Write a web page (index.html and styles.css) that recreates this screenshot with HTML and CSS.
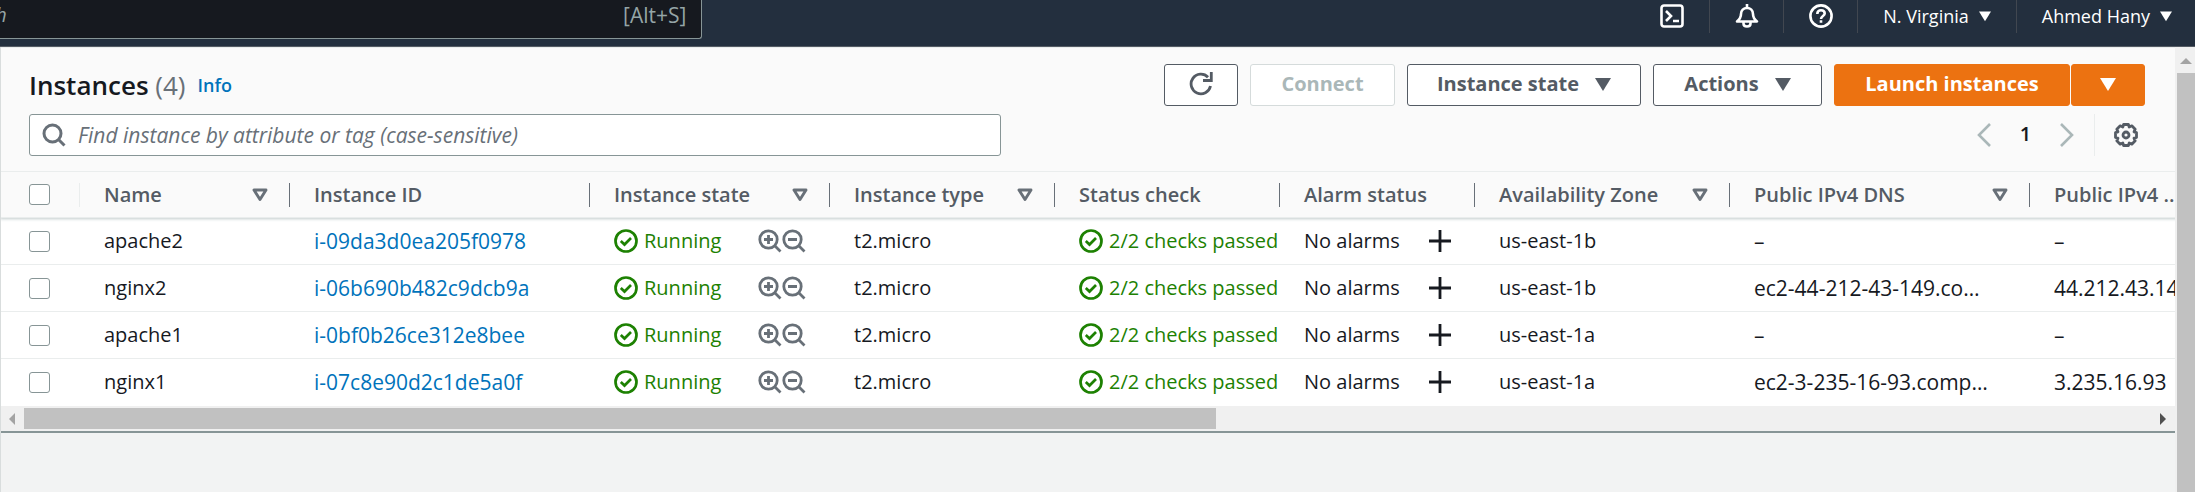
FILE: index.html
```html
<!DOCTYPE html>
<html lang="en">
<head>
<meta charset="utf-8">
<title>Instances | EC2 Management Console</title>
<link rel="stylesheet" href="styles.css">
</head>
<body>
<svg class="sprite" aria-hidden="true">
  <symbol id="caret" viewBox="0 0 16 16"><path d="M0 2h16L8 15z" fill="currentColor"/></symbol>
  <symbol id="sort" viewBox="0 0 16 14"><path d="M2 2h12L8 11.500z" fill="none" stroke="currentColor" stroke-width="2.900" stroke-linejoin="round"/></symbol>
  <symbol id="ok" viewBox="0 0 24 24"><g fill="none" stroke="currentColor" stroke-width="2.700"><circle cx="12" cy="12" r="10.500"/><path d="M6.800 12l3.700 3.500 6.500-6.500"/></g></symbol>
  <symbol id="zoom-in" viewBox="0 0 24 24"><g fill="none" stroke="currentColor" stroke-width="2.800"><circle cx="10.500" cy="10.500" r="8.700"/><path d="M16.500 16.500l6 6M6 10.500h9M10.500 6v9"/></g></symbol>
  <symbol id="zoom-out" viewBox="0 0 24 24"><g fill="none" stroke="currentColor" stroke-width="2.800"><circle cx="10.500" cy="10.500" r="8.700"/><path d="M16.500 16.500l6 6M6 10.500h9"/></g></symbol>
  <symbol id="plus" viewBox="0 0 22 22"><path d="M11 0v22M0 11h22" fill="none" stroke="currentColor" stroke-width="2.800"/></symbol>
</svg>

<header class="topbar">
  <div class="topsearch">
    <input class="topsearch-input" type="search" aria-label="Search services" placeholder="Search">
    <kbd class="shortcut">[Alt+S]</kbd>
  </div>
  <nav class="topnav" aria-label="Account">
    <button class="nav-icon" aria-label="CloudShell"><svg class="ico24" viewBox="0 0 24 24"><g fill="none" stroke="currentColor" stroke-width="2.600"><rect x="1.500" y="1.500" width="21" height="21" rx="2.500"/><path d="M6 7l5 5-5 5M13 17h6"/></g></svg></button>
    <button class="nav-icon" aria-label="Notifications"><svg class="ico24" viewBox="0 0 24 24"><g fill="none" stroke="currentColor" stroke-width="2.600" stroke-linejoin="round"><path d="M12 0v4M2 17.500c3-2.500 4-4.500 4-7.500 0-3.700 2.500-6 6-6s6 2.300 6 6c0 3 1 5 4 7.500zM8.500 18v1.500c0 2 1.500 3 3.500 3s3.500-1 3.500-3V18"/></g></svg></button>
    <button class="nav-icon" aria-label="Support"><svg class="ico24" viewBox="0 0 24 24"><g fill="none" stroke="currentColor" stroke-width="2.600"><circle cx="12" cy="12" r="10.600"/><path d="M8.300 10c0-2.300 1.600-3.700 3.700-3.700s3.700 1.300 3.700 3.200c0 2.500-3.700 2.500-3.700 5.500M12 16.200v2.600"/></g></svg></button>
    <button class="nav-menu">N. Virginia <svg class="caret-s"><use href="#caret"/></svg></button>
    <button class="nav-menu">Ahmed Hany <svg class="caret-s"><use href="#caret"/></svg></button>
  </nav>
</header>

<div class="body">
  <main class="content">
    <section class="panel">
      <div class="panel-head">
        <div class="row">
          <h1 class="title">Instances <span class="count">(4)</span></h1>
          <a class="info" href="#info">Info</a>
          <div class="actions">
            <button class="btn refresh" aria-label="Refresh"><svg class="ico24" viewBox="0 0 24 24"><path d="M21.500 14A9.800 9.800 0 1 1 19 5.200M22.300 0v8.500H14" fill="none" stroke="currentColor" stroke-width="2.800"/></svg></button>
            <button class="btn connect" disabled>Connect</button>
            <button class="btn state">Instance state <svg class="caret"><use href="#caret"/></svg></button>
            <button class="btn acts">Actions <svg class="caret"><use href="#caret"/></svg></button>
            <div class="split">
              <button class="btn primary launch">Launch instances</button>
              <button class="btn primary more" aria-label="More launch options"><svg class="caret"><use href="#caret"/></svg></button>
            </div>
          </div>
        </div>
        <div class="row">
          <div class="filter">
            <svg class="ico24" viewBox="0 0 24 24"><g fill="none" stroke="currentColor" stroke-width="3"><circle cx="10.500" cy="10.500" r="8.500"/><path d="M16 16l6.500 6.500"/></g></svg>
            <input class="filter-input" type="text" aria-label="Find instance" placeholder="Find instance by attribute or tag (case-sensitive)">
          </div>
          <div class="pager">
            <button class="page-arrow" aria-label="Previous page"><svg class="chev" viewBox="0 0 14 24"><path d="M13 1L2 12l11 11" fill="none" stroke="currentColor" stroke-width="2.600"/></svg></button>
            <span class="page">1</span>
            <button class="page-arrow" aria-label="Next page"><svg class="chev" viewBox="0 0 14 24"><path d="M1 1l11 11L1 23" fill="none" stroke="currentColor" stroke-width="2.600"/></svg></button>
            <button class="gear" aria-label="Preferences"><svg class="ico24" viewBox="0 0 24 24"><g fill="none" stroke="currentColor" stroke-width="2.800" stroke-linejoin="round"><path d="M9.600 1.500h4.800l.8 2.500 2.600-1.200 3.400 3.400L20 8.800l2.500.8v4.800l-2.500.8 1.200 2.600-3.400 3.400-2.600-1.200-.8 2.500H9.600L8.800 20l-2.600 1.200-3.400-3.400L4 15.200l-2.500-.8V9.600L4 8.800 2.800 6.200l3.400-3.400L8.800 4z"/><circle cx="12" cy="12" r="3"/></g></svg></button>
          </div>
        </div>
      </div>

      <div class="table-wrap">
        <table class="grid">
          <colgroup><col class="w80"><col class="w210"><col class="w300"><col class="w240"><col class="w225"><col class="w225"><col class="w195"><col class="w255"><col class="w300"><col class="w225"></colgroup>
          <thead>
            <tr>
              <th class="pick"><div class="th"><input type="checkbox" class="check" aria-label="Select all"></div></th>
              <th><div class="th">Name<button class="sort" aria-label="Sort by name"><svg class="sort-ico"><use href="#sort"/></svg></button></div></th>
              <th><div class="th">Instance ID</div></th>
              <th><div class="th">Instance state<button class="sort" aria-label="Sort by state"><svg class="sort-ico"><use href="#sort"/></svg></button></div></th>
              <th><div class="th">Instance type<button class="sort" aria-label="Sort by type"><svg class="sort-ico"><use href="#sort"/></svg></button></div></th>
              <th><div class="th">Status check</div></th>
              <th><div class="th">Alarm status</div></th>
              <th><div class="th">Availability Zone<button class="sort" aria-label="Sort by zone"><svg class="sort-ico"><use href="#sort"/></svg></button></div></th>
              <th><div class="th">Public IPv4 DNS<button class="sort" aria-label="Sort by DNS"><svg class="sort-ico"><use href="#sort"/></svg></button></div></th>
              <th><div class="th">Public IPv4 ...</div></th>
            </tr>
          </thead>
          <tbody>
            <tr>
              <td class="pick"><input type="checkbox" class="check" aria-label="Select apache2"></td>
              <td>apache2</td>
              <td class="code"><a href="#i-09da3d0ea205f0978">i-09da3d0ea205f0978</a></td>
              <td><div class="cell"><span class="good"><svg class="ico24"><use href="#ok"/></svg>Running</span><span class="zooms"><button aria-label="Include state"><svg class="ico24"><use href="#zoom-in"/></svg></button><button aria-label="Exclude state"><svg class="ico24"><use href="#zoom-out"/></svg></button></span></div></td>
              <td>t2.micro</td>
              <td><span class="good"><svg class="ico24"><use href="#ok"/></svg>2/2 checks passed</span></td>
              <td><div class="cell">No alarms<button class="add" aria-label="Add alarm"><svg class="ico22"><use href="#plus"/></svg></button></div></td>
              <td>us-east-1b</td><td class="code">–</td><td class="code">–</td>
            </tr>
            <tr>
              <td class="pick"><input type="checkbox" class="check" aria-label="Select nginx2"></td>
              <td>nginx2</td>
              <td class="code"><a href="#i-06b690b482c9dcb9a">i-06b690b482c9dcb9a</a></td>
              <td><div class="cell"><span class="good"><svg class="ico24"><use href="#ok"/></svg>Running</span><span class="zooms"><button aria-label="Include state"><svg class="ico24"><use href="#zoom-in"/></svg></button><button aria-label="Exclude state"><svg class="ico24"><use href="#zoom-out"/></svg></button></span></div></td>
              <td>t2.micro</td>
              <td><span class="good"><svg class="ico24"><use href="#ok"/></svg>2/2 checks passed</span></td>
              <td><div class="cell">No alarms<button class="add" aria-label="Add alarm"><svg class="ico22"><use href="#plus"/></svg></button></div></td>
              <td>us-east-1b</td><td class="code">ec2-44-212-43-149.co…</td><td class="code">44.212.43.149</td>
            </tr>
            <tr>
              <td class="pick"><input type="checkbox" class="check" aria-label="Select apache1"></td>
              <td>apache1</td>
              <td class="code"><a href="#i-0bf0b26ce312e8bee">i-0bf0b26ce312e8bee</a></td>
              <td><div class="cell"><span class="good"><svg class="ico24"><use href="#ok"/></svg>Running</span><span class="zooms"><button aria-label="Include state"><svg class="ico24"><use href="#zoom-in"/></svg></button><button aria-label="Exclude state"><svg class="ico24"><use href="#zoom-out"/></svg></button></span></div></td>
              <td>t2.micro</td>
              <td><span class="good"><svg class="ico24"><use href="#ok"/></svg>2/2 checks passed</span></td>
              <td><div class="cell">No alarms<button class="add" aria-label="Add alarm"><svg class="ico22"><use href="#plus"/></svg></button></div></td>
              <td>us-east-1a</td><td class="code">–</td><td class="code">–</td>
            </tr>
            <tr>
              <td class="pick"><input type="checkbox" class="check" aria-label="Select nginx1"></td>
              <td>nginx1</td>
              <td class="code"><a href="#i-07c8e90d2c1de5a0f">i-07c8e90d2c1de5a0f</a></td>
              <td><div class="cell"><span class="good"><svg class="ico24"><use href="#ok"/></svg>Running</span><span class="zooms"><button aria-label="Include state"><svg class="ico24"><use href="#zoom-in"/></svg></button><button aria-label="Exclude state"><svg class="ico24"><use href="#zoom-out"/></svg></button></span></div></td>
              <td>t2.micro</td>
              <td><span class="good"><svg class="ico24"><use href="#ok"/></svg>2/2 checks passed</span></td>
              <td><div class="cell">No alarms<button class="add" aria-label="Add alarm"><svg class="ico22"><use href="#plus"/></svg></button></div></td>
              <td>us-east-1a</td><td class="code">ec2-3-235-16-93.comp…</td><td class="code">3.235.16.93</td>
            </tr>
          </tbody>
        </table>
      </div>
      <div class="hscroll">
        <svg class="harrow left" viewBox="0 0 6 12"><path d="M6 0v12L0 6z" fill="currentColor"/></svg>
        <div class="htrack"><div class="hthumb"></div></div>
        <svg class="harrow right" viewBox="0 0 6 12"><path d="M0 0v12l6-6z" fill="currentColor"/></svg>
      </div>
    </section>
  </main>
  <div class="vscroll">
    <svg class="varrow" viewBox="0 0 12 6"><path d="M0 6h12L6 0z" fill="currentColor"/></svg>
    <div class="vthumb"></div>
  </div>
</div>
</body>
</html>
```
FILE: styles.css
```css
* { box-sizing: border-box; }
html, body { height: 100%; }
body {
  margin: 0;
  display: flex;
  flex-direction: column;
  overflow: hidden;
  background: #f2f3f3;
  color: #16191f;
  font-family: "Open Sans", "Noto Sans", sans-serif;
  font-size: 20px;
  line-height: 28px;
}
button {
  display: flex;
  align-items: center;
  justify-content: center;
  margin: 0;
  padding: 0;
  border: 0;
  background: none;
  color: inherit;
  font: inherit;
}
svg { display: block; flex: none; }
a { color: #0073bb; text-decoration: none; }
.sprite { position: absolute; width: 0; height: 0; }
.ico24 { width: 24px; height: 24px; }
.ico22 { width: 22px; height: 22px; }

/* Top navigation */
.topbar {
  flex: none;
  display: flex;
  justify-content: space-between;
  align-items: flex-start;
  height: 47px;
  background: #232f3e;
  border-bottom: 1px solid #545b64;
  color: #fff;
  font-size: 18px;
}
.topsearch {
  display: flex;
  align-items: center;
  width: 32%;
  height: 39px;
  padding: 0 15px 8px 0;
  background: #16191f;
  border: 1px solid #879596;
  border-width: 0 1px 1px 0;
  border-radius: 0 0 3px 0;
}
.topsearch-input {
  flex: 1;
  min-width: 0;
  padding: 0;
  border: 0;
  background: none;
  color: #fff;
  font: italic 20px/28px "Open Sans", "Noto Sans", sans-serif;
  text-indent: -53px;
}
.topsearch-input::placeholder { color: #95a5a6; opacity: 1; }
.shortcut { color: #95a5a6; font-family: inherit; font-size: 21px; }
.topnav { display: flex; height: 33px; padding-right: 23px; }
.topnav > * { padding-bottom: 1px; }
.topnav > * + * { border-left: 1px solid #414750; }
.nav-icon { width: 74px; }
.nav-menu { gap: 10px; padding: 0 25px 1px; }
.nav-menu:last-child { padding-right: 0; }
.caret-s { width: 12px; height: 12px; }

/* Page body */
.body { flex: 1; display: flex; min-height: 0; }
.content {
  flex: 1;
  min-width: 0;
  border-left: 1px solid #d9dddd;
}
.panel {
  border-top: 1px solid #eaeded;
  border-bottom: 2px solid #879596;
  background: #fff;
}
.panel-head {
  display: flex;
  flex-direction: column;
  gap: 8px;
  padding: 16px 30px 15px 28px;
  background: #fafafa;
}
.row { display: flex; align-items: center; }
.title { margin: 0; font-size: 26px; font-weight: 600; }
.count { color: #687078; font-weight: 400; }
.info { margin-left: 12px; font-size: 18px; font-weight: 600; }
.actions { display: flex; gap: 12px; margin-left: auto; }
.btn {
  height: 42px;
  padding-bottom: 2px;
  border: 1px solid #545b64;
  border-radius: 3px;
  background: #fff;
  color: #545b64;
  font-weight: 700;
  gap: 16px;
}
.btn:disabled { border-color: #d5dbdb; color: #aab7b8; }
.caret { width: 16px; height: 16px; }
.refresh { width: 74px; }
.connect { width: 145px; }
.state { width: 234px; }
.acts { width: 169px; }
.split { display: flex; gap: 1px; }
.primary { border-color: #ec7211; background: #ec7211; color: #fff; }
.launch { width: 236px; }
.more { width: 74px; }

.filter {
  display: flex;
  align-items: center;
  gap: 12px;
  flex: 0 1 972px;
  height: 42px;
  padding: 0 12px;
  border: 1px solid #879596;
  border-radius: 3px;
  background: #fff;
  color: #687078;
}
.filter-input {
  flex: 1;
  min-width: 0;
  padding: 0;
  border: 0;
  background: none;
  font: italic 21px/28px "Open Sans", "Noto Sans", sans-serif;
}
.filter-input::placeholder { color: #687078; opacity: 1; }
.pager { display: flex; align-items: center; margin-left: auto; }
.page-arrow { width: 14px; color: #aab7b8; }
.chev { width: 14px; height: 24px; }
.page { width: 69px; padding-bottom: 2px; font-weight: 600; text-align: center; }
.gear {
  height: 42px;
  margin-left: 20px;
  padding: 0 7px 0 19px;
  border-left: 1px solid #eaeded;
  color: #545b64;
}

/* Instances table */
.table-wrap { overflow: hidden; }
.grid { width: 2255px; table-layout: fixed; border-spacing: 0; margin-left: -1px; }
.w80 { width: 80px; }
.w195 { width: 195px; }
.w210 { width: 210px; }
.w225 { width: 225px; }
.w240 { width: 240px; }
.w255 { width: 255px; }
.w300 { width: 300px; }
th, td {
  height: 47px;
  padding: 0 0 0 24px;
  overflow: hidden;
  text-align: left;
  white-space: nowrap;
}
th {
  padding-left: 0;
  background: #fafafa;
  border-top: 1px solid #eaeded;
  border-bottom: 1px solid #eaeded;
  color: #545b64;
  font-weight: 600;
}
td { border-bottom: 1px solid #eaeded; }
tbody tr:last-child td { border-bottom-color: #fff; }
thead { position: relative; box-shadow: 0 1px 3px #c3cccc; }
.th {
  display: flex;
  align-items: center;
  justify-content: space-between;
  height: 24px;
  padding: 0 21px 0 24px;
  border-right: 1px solid #687078;
}
.pick, .pick .th { padding-left: 29px; }
th.pick { padding-left: 0; }
.pick .th { border-color: #eaeded; }
.code { font-size: 21px; }
.sort { color: #687078; }
.sort-ico { width: 16px; height: 14px; }
.check {
  appearance: none;
  display: block;
  width: 21px;
  height: 21px;
  margin: 0;
  border: 1px solid #879596;
  border-radius: 3px;
  background: #fff;
}
.cell { display: flex; align-items: center; justify-content: space-between; padding-right: 24px; }
.good { display: flex; align-items: center; gap: 6px; color: #1d8102; }
.zooms { display: flex; color: #687078; }

/* Scroll indicators */
.hscroll {
  display: flex;
  align-items: center;
  height: 25px;
  background: #f0f0f0;
}
.htrack { flex: 1; height: 21px; }
.hthumb { width: 56%; height: 100%; background: #c1c1c1; }
.harrow { width: 6px; height: 12px; margin: 0 9px 0 8px; }
.left { color: #a3a3a3; }
.right { color: #505050; }
.vscroll {
  width: 20px;
  display: flex;
  flex-direction: column;
  align-items: center;
  gap: 9px;
  padding: 11px 0 0 2px;
  background: #f0f0f0;
}
.varrow { width: 12px; height: 6px; color: #a3a3a3; }
.vthumb { flex: 1; align-self: stretch; background: #c1c1c1; }
```
